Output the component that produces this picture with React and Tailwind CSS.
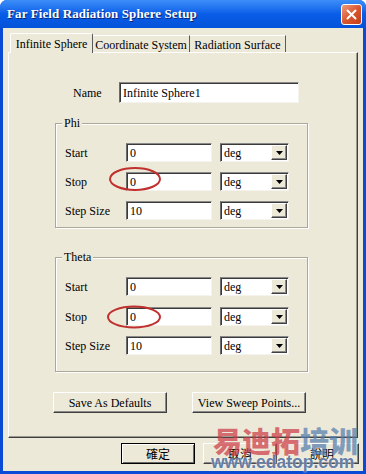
const sunken =
  "bg-white border border-t-[#8a8a8a] border-l-[#6a6a6a] border-r-[#f4f3ee] border-b-[#f4f3ee] shadow-[inset_1px_1px_0_#3a3a3a]";
const raised =
  "bg-[#ECE9D8] border border-t-white border-l-white border-r-[#404040] border-b-[#404040] shadow-[inset_-1px_-1px_0_#8a8a8a]";

function Field({ value, w = "w-[86px]" }) {
  return (
    <div className={`${sunken} ${w} h-[19px] flex items-center pl-[3px] leading-none`}>
      {value}
    </div>
  );
}

function Select() {
  return (
    <div className={`${sunken} w-[69px] h-[19px] flex items-center justify-between`}>
      <span className="pl-[3px] leading-none">deg</span>
      <div className={`${raised} w-[16px] h-[15px] mr-px flex items-center justify-center`}>
        <svg width="7" height="4" viewBox="0 0 7 4">
          <path d="M0 0 H7 L3.5 4 Z" fill="black" />
        </svg>
      </div>
    </div>
  );
}

function Row({ label, value, className = "" }) {
  return (
    <div className={`flex items-center ${className}`}>
      <span className="ml-[9px] w-[61px] leading-none">{label}</span>
      <Field value={value} />
      <div className="w-[8px]" />
      <Select />
    </div>
  );
}

function Group({ title, h, gaps }) {
  return (
    <div
      className={`relative ml-[46px] w-[253px] ${h} border border-[#aca899] shadow-[inset_1px_1px_0_white,1px_1px_0_white]`}
    >
      <span className="absolute -top-[8px] left-[6px] bg-[#ECE9D8] px-[2px] leading-[14px]">
        {title}
      </span>
      <Row label="Start" value="0" className="mt-[19px]" />
      <Row label="Stop" value="0" className={gaps[0]} />
      <Row label="Step Size" value="10" className={gaps[1]} />
    </div>
  );
}

export default function App() {
  return (
    <div className="relative w-[366px] h-[474px] flex flex-col overflow-hidden rounded-t-[7px] bg-[#0a4bd6] font-['Liberation_Serif','Noto_Sans_CJK_TC',serif] text-[12px] text-black">
      {/* Title bar */}
      <div className="h-[28px] shrink-0 flex items-center justify-between pl-[7px] pr-[4px] bg-gradient-to-b from-[#3d8ef8] via-[#0a5de8] to-[#0452d9]">
        <span className="text-white font-bold text-[13px] tracking-[0.1px] [text-shadow:1px_1px_0_#0b2470]">
          Far Field Radiation Sphere Setup
        </span>
        <div className="w-[21px] h-[21px] rounded-[3px] border border-white bg-gradient-to-br from-[#ee9a7c] via-[#d9572f] to-[#c23d18] flex items-center justify-center">
          <svg width="11" height="11" viewBox="0 0 11 11">
            <path d="M1.5 1.5 L9.5 9.5 M9.5 1.5 L1.5 9.5" stroke="white" strokeWidth="2" strokeLinecap="round" />
          </svg>
        </div>
      </div>

      {/* Body */}
      <div className="flex-1 mx-[3px] mb-[3px] bg-[#ECE9D8] flex flex-col">
        {/* Tabs */}
        <div className="mt-[5px] ml-[7px] h-[19px] flex items-end relative z-10">
          <div className="h-[20px] w-[83px] -mb-px bg-[#ECE9D8] border-t border-l border-white border-r-[1px] border-r-[#5a5a5a] rounded-t-[2px] flex items-center justify-center pt-[1px]">
            Infinite Sphere
          </div>
          <div className="h-[17px] w-[97px] border-t border-white border-r border-r-[#5a5a5a] flex items-center justify-center pt-[2px]">
            Coordinate System
          </div>
          <div className="h-[17px] w-[96px] border-t border-white border-r border-r-[#5a5a5a] flex items-center justify-center pt-[2px]">
            Radiation Surface
          </div>
        </div>

        {/* Panel */}
        <div className="mx-[5px] h-[386px] border border-t-white border-l-white border-r-[#404040] border-b-[#404040] shadow-[inset_-1px_-1px_0_#9a9a8e] flex flex-col">
          <div className="mt-[29px] flex items-center">
            <span className="ml-[64px] w-[46px] leading-none">Name</span>
            <div className={`${sunken} w-[180px] h-[21px] flex items-center pl-[3px] leading-none`}>
              Infinite Sphere1
            </div>
          </div>

          <div className="mt-[20px]">
            <Group title="Phi" h="h-[105px]" gaps={["mt-[10px]", "mt-[10px]"]} />
          </div>
          <div className="mt-[29px]">
            <Group title="Theta" h="h-[115px]" gaps={["mt-[11px]", "mt-[10px]"]} />
          </div>

          <div className="mt-[20px] ml-[44px] flex gap-[25px]">
            <div className={`${raised} w-[114px] h-[21px] flex items-center justify-center leading-none`}>
              Save As Defaults
            </div>
            <div className={`${raised} w-[114px] h-[21px] flex items-center justify-center leading-none`}>
              View Sweep Points...
            </div>
          </div>
        </div>

        {/* Bottom buttons */}
        <div className="mt-[5px] pr-[4px] flex justify-end gap-[8px] font-['Noto_Sans_CJK_TC',sans-serif] text-[12px]">
          <div className="w-[74px] h-[21px] border border-black bg-[#ECE9D8] shadow-[inset_1px_1px_0_white,inset_-1px_-1px_0_#6a6a6a] flex items-center justify-center leading-none">
            確定
          </div>
          <div className={`${raised} w-[74px] h-[21px] flex items-center justify-center leading-none`}>
            取消
          </div>
          <div className={`${raised} w-[74px] h-[21px] flex items-center justify-center leading-none`}>
            說明
          </div>
        </div>
      </div>

      {/* Red annotation ellipses */}
      <svg className="absolute left-0 top-0 pointer-events-none" width="366" height="474">
        <ellipse cx="135" cy="179" rx="25" ry="11" fill="none" stroke="#c0302e" strokeWidth="2" />
        <ellipse cx="134" cy="317" rx="26" ry="10.5" fill="none" stroke="#c0302e" strokeWidth="2" />
      </svg>

      {/* Watermark */}
      <div className="absolute left-[213px] top-[426px] pointer-events-none font-['Noto_Sans_CJK_SC',sans-serif] font-black text-[29px] leading-none whitespace-nowrap">
        <span className="text-[rgba(205,60,70,0.72)]">易迪拓</span>
        <span className="text-[rgba(85,125,175,0.72)]">培训</span>
      </div>
      <div className="absolute left-[211px] top-[454px] pointer-events-none font-['Liberation_Sans',sans-serif] font-bold text-[17.5px] leading-none text-[rgba(75,105,155,0.85)] [text-shadow:0_0_2px_white]">
        www.edatop.com
      </div>
    </div>
  );
}
